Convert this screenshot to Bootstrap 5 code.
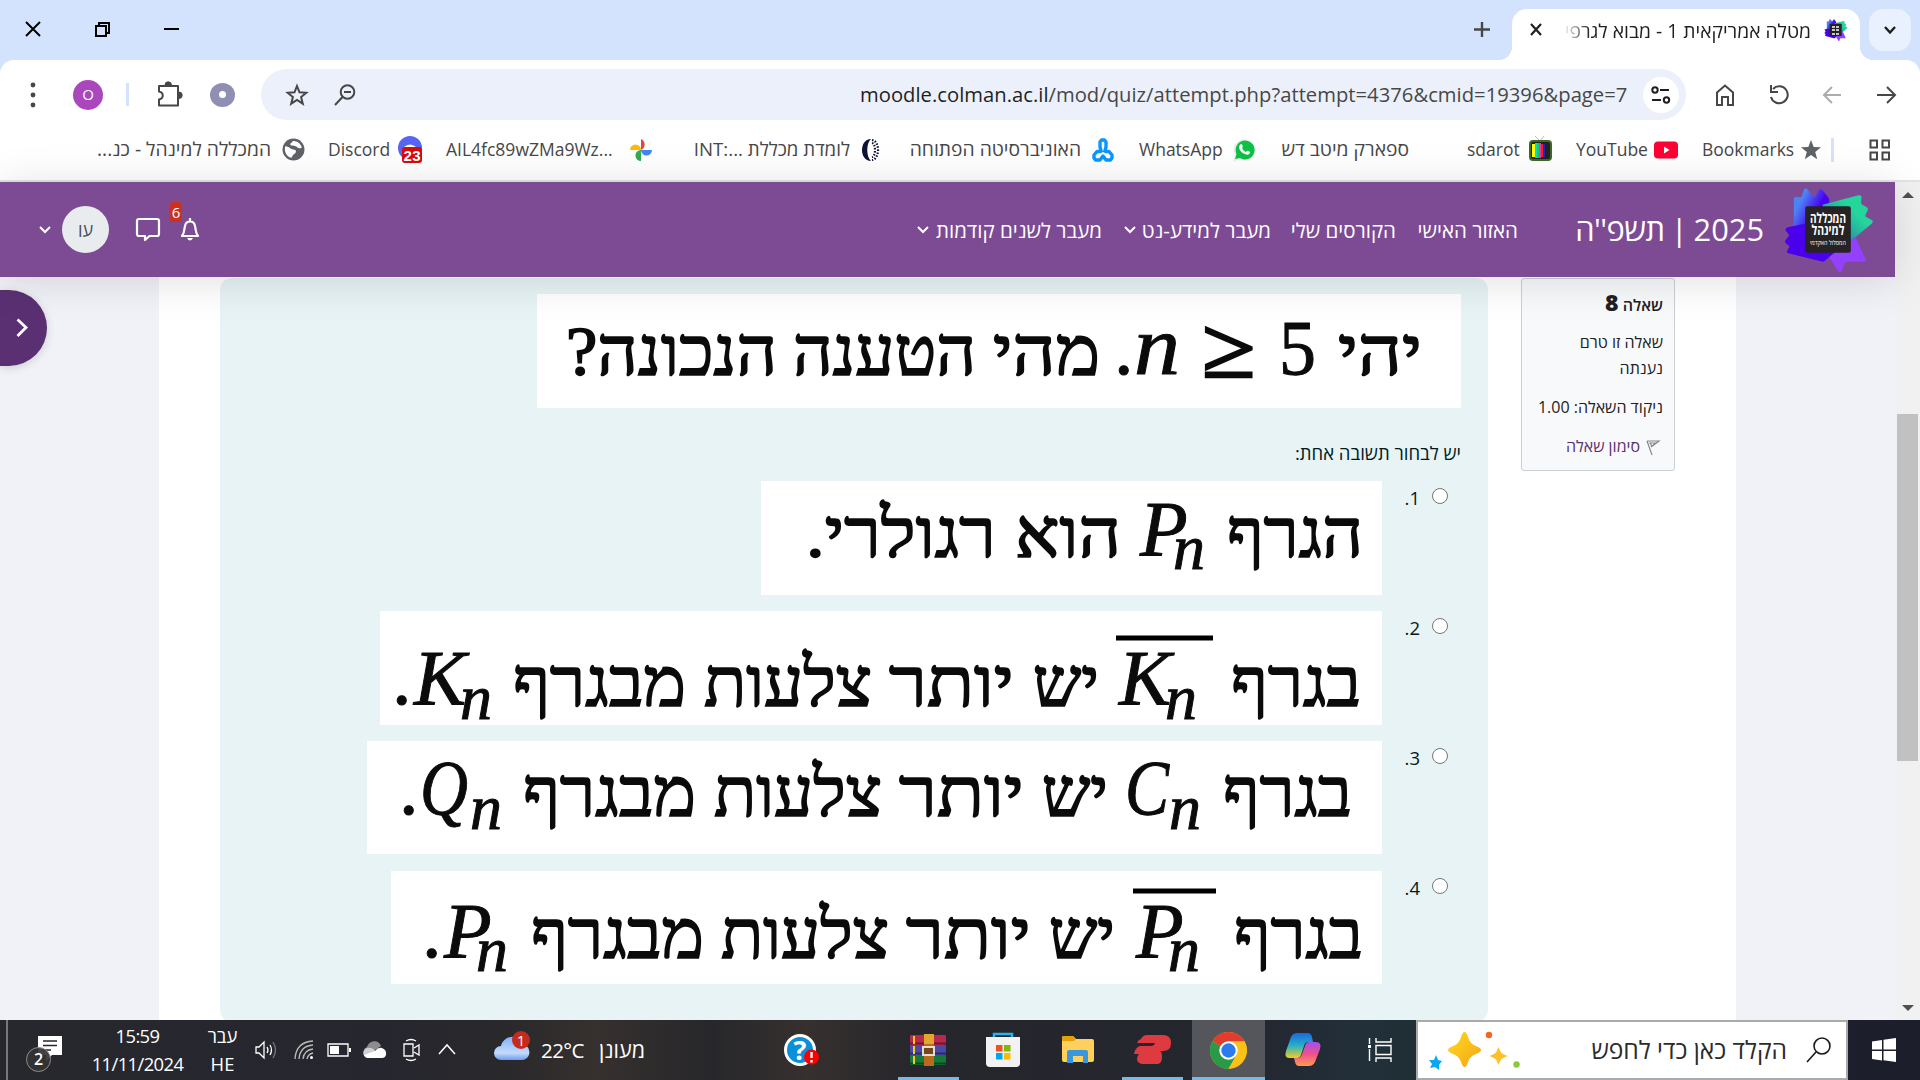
<!DOCTYPE html>
<html lang="he">
<head>
<meta charset="utf-8">
<title>מטלה אמריקאית 1 - מבוא לגרפים</title>
<link rel="stylesheet" href="https://cdn.jsdelivr.net/npm/bootstrap@5.3.0/dist/css/bootstrap.min.css">
<style>
html,body{height:100%;overflow:hidden}
body{font-family:"Open Sans","Liberation Sans",sans-serif;width:1920px;height:1080px;background:#fff;color:#1f1f1f;line-height:1}
svg{display:block;flex:none;overflow:visible}
.bar>*{flex:none;white-space:nowrap}
.ln{fill:none;stroke:#474747;stroke-width:2}
/* tab strip */
.strip{height:60px;background:#d3e3fd}
.strip-l{height:58px}
.w-close{margin-left:25px}.w-rest{margin-left:54px}.w-min{margin-left:54px}
.w-plus{margin-left:1295px}
.tabx{margin-left:22px;width:348px;height:51px;margin-top:9px;background:#fff;border-radius:15px 15px 0 0;position:relative}
.tabx:before,.tabx:after{content:"";position:absolute;bottom:0;width:14px;height:14px}
.tabx:before{left:-14px;background:radial-gradient(circle at 0 0,#d3e3fd 14px,#fff 14.5px)}
.tabx:after{right:-14px;background:radial-gradient(circle at 100% 0,#d3e3fd 14px,#fff 14.5px)}
.tab-x{margin-left:17px;margin-bottom:9px}
.tab-t{margin-left:20px;width:262px;padding-right:14px;font-size:19.3px;overflow:hidden;line-height:28px;margin-bottom:7px;-webkit-mask-image:linear-gradient(90deg,transparent 0,#000 27px)}
.tab-i{margin-left:-1px;margin-bottom:9px}
.tabs-btn{margin-left:9px;margin-top:9px;width:42px;height:42px;border-radius:14px;background:#e9f0fe}
/* toolbar */
.tools-wrap{background:#d3e3fd}
.tools{height:69px;background:#fff;border-radius:14px 14px 0 0}
.t-dots{margin-left:30px}
.t-av{margin-left:37px;width:30px;height:30px;border-radius:50%;background:#ab47bc;color:#fff;font-size:15px}
.t-sep{margin-left:23px;width:3px;height:23px;background:#d3e3fd}
.t-puz{margin-left:27px}
.t-dot{margin-left:27px;width:25px;height:24px;border-radius:50%;background:#8e8fb3}
.t-dot i{width:7px;height:7px;border-radius:50%;background:#fff}
.omni{margin-left:26px;width:1425px;height:51px;border-radius:26px;background:#ebf0fa}
.o-star{margin-left:24px}.o-mag{margin-left:24px}
.o-url{margin-left:503px;width:768px;font-size:20.2px;color:#474747;line-height:30px;letter-spacing:.03px;margin-bottom:2px}
.o-url b{font-weight:400;color:#1f1f1f}
.o-set{margin-left:15px;width:36px;height:36px;border-radius:50%;background:#fff}
.t-home{margin-left:28px}.t-ref{margin-left:32px}.t-bk{margin-left:32px;opacity:.45}.t-fw{margin-left:35px}
/* bookmarks */
.marks{height:51px;background:#fff;font-size:17.5px;color:#474747;padding-bottom:10px}
.marks span{line-height:26px;text-align:right;margin-bottom:1px}
.marks span[dir]{font-size:19.3px;text-align:right}
.marks .k4[dir]{font-size:18.7px}
.marks .rule{width:3px;height:24px;background:#d3e3fd;margin-left:11px}
.k1{width:172px;margin-left:99px}.k2{width:59px;margin-left:23px}.k3{width:164px;margin-left:24px}.k4{width:156px;margin-left:40px}.k5{width:173px;margin-left:27px}.k6{width:82px;margin-left:25px}.k7{width:129px;margin-left:24px}.k8{width:51px;margin-left:58px}.k9{width:68px;margin-left:24px}.k10{width:87px;margin-left:24px}
.marks .gi{margin-left:11px}.marks .gn{margin-left:10px}
.edge{height:2px;background:#dfe5e3}
/* site header */
.site{width:1895px;height:95px;background:#7d4b94;color:#fff;z-index:3;position:relative;box-shadow:0 4px 44px rgba(0,0,0,.13)}
.h-chev{margin-left:39px}
.h-av{margin-left:11px;width:47px;height:47px;border-radius:50%;background:#e9ecef;color:#495057;font-size:18px}
.h-chat{margin-left:27px}
.h-bell{margin-left:20px;position:relative}
.h-num{position:absolute;left:-10px;top:-16px;width:12px;height:20px;border-radius:2px;background:#ca3120;font-size:15px;line-height:20px;text-align:center}
.navt{font-size:20.5px;font-weight:500;line-height:30px}
.n-c1{margin-left:717px}.n1{margin-left:6px;width:167px}.n-c2{margin-left:22px}.n2{margin-left:6px;width:129px}.n3{margin-left:22px;width:103px}.n4{margin-left:21px;width:101px}
.h-title{margin-left:57px;width:189px;font-size:30.8px;line-height:48px;word-spacing:-2px;margin-bottom:2px}
.h-title span{letter-spacing:-.5px}
.h-logo{margin-left:19px}
/* page */
.view{height:743px;background:#f0f2f7}
.sheet{margin-left:112px;width:1577px;background:#fff}
.drawer{width:47px;height:76px;margin-top:13px;border-radius:0 38px 38px 0;background:#5a3072;box-shadow:0 2px 8px rgba(0,0,0,.15)}
.drawer svg{margin-left:16px}
.question{margin-left:61px;width:1268px;height:744px;margin-top:1px;border-radius:12px;background:#e7f3f5;padding:16px 27px 0 0}
.pic{background:#fff}
.prompt{font-size:18.5px;line-height:26px;margin:32px 0 15px;color:#001a1e}
.opt{height:114px;margin-bottom:16px}
.opt input{appearance:none;width:16px;height:16px;border:1.3px solid #767676;border-radius:50%;background:#fff;margin:7px 13px 0 12px}
.opt label{width:17px;margin-left:21px;font-size:18.5px;line-height:34px;text-align:right;color:#001a1e}
.heb{direction:rtl;font-family:"Liberation Serif",serif;font-size:69px;fill:#0b0b0b;stroke:#0b0b0b;stroke-width:1.7}
.mth{font-family:"Liberation Serif",serif;font-style:italic;font-size:78px;fill:#0b0b0b;stroke:#0b0b0b;stroke-width:1}
.sb{font-size:64px}.up{font-style:normal}.nn{font-size:84px}.ge{font-size:86px;stroke-width:2.5}
.info{margin-left:33px;width:154px;height:193px;margin-top:1px;border:1px solid #cad0d7;border-radius:3px;background:#f8f9fa;padding:5px 11px;font-size:16px;color:#1d2125}
.info>div{white-space:nowrap}
.i-no{font-weight:600;line-height:36px;margin-bottom:6px}.i-no b{font-size:23px}
.i-st{line-height:26px;margin-bottom:13px}.i-fl{color:#5a3072;margin-top:13px;line-height:26px}
.i-fl svg{margin:3px 2px 0 6px}
.i-gr{line-height:26px}
.scroller{width:25px;height:838px;background:#f1f1f1}
.thumb{width:21px;height:347px;background:#c1c1c1;margin-top:216px}
.sc-u{margin-top:10px}.sc-d{margin-top:244px}
/* taskbar */
.task{height:60px;background:linear-gradient(90deg,#27282d 0,#26262f 20%,#29282b 26%,#36302e 31%,#27272b 37%,#36302e 42%,#26262c 48%,#24262f 65%,#22303a 71%,#1f2f35 74%,#1c1f2b 97%);color:#fff;font-size:18px}
.x0{margin-left:6px;width:2px;height:60px;background:#77787b}
.x1{margin-left:18px;margin-top:8px}
.x2{margin-left:25px;width:97px;font-size:18.4px;line-height:28px;letter-spacing:-.6px}
.x3{margin-left:19px;width:35px;line-height:28px;font-size:18.4px}
.x4{margin-left:15px}.x5{margin-left:17px}.x6{margin-left:13px}.x7{margin-left:11px}.x8{margin-left:16px}.x9{margin-left:17px}.x10{margin-left:37px}
.x11{margin-left:11px;width:45px;font-size:20.6px;letter-spacing:-.6px;line-height:30px}
.x12{margin-left:12px;width:47px;font-size:21.5px;line-height:30px}
.x13{margin-left:139px}
.app{width:61px;height:60px;border-bottom:3px solid transparent;padding-top:3px}
.app.run{border-color:#76b9ed}
.app.on{width:73px;background:#55565b}
.a1{margin-left:78px}.a2{margin-left:13px}.a3{margin-left:14px}.a4{margin-left:14px}.a5{margin-left:9px}.a6{margin-left:7px}.a7{margin-left:34px}
.find{margin-left:23px;width:432px;height:60px;background:#fff;border:2px solid #a9aaac;color:#2b2b2b}
.f-s{margin-left:10px}
.f-t{margin-left:66px;width:200px;font-size:24.6px;line-height:34px}
.f-m{margin-left:19px}
.win{margin-left:24px}
</style>
<script src="https://cdn.jsdelivr.net/npm/bootstrap@5.3.0/dist/js/bootstrap.bundle.min.js"></script>
</head>
<body class="d-flex flex-column">
<svg width="0" height="0" class="position-absolute">
<defs>
<linearGradient id="lb" x1="0" y1=".2" x2="1" y2=".8"><stop offset=".2" stop-color="#4b83f5"/><stop offset=".65" stop-color="#4a00f0"/></linearGradient>
<linearGradient id="lg" x1="0" y1="1" x2="1" y2="0"><stop offset=".1" stop-color="#2a6da8"/><stop offset=".65" stop-color="#24d69c"/></linearGradient>
<linearGradient id="cl" x1="0" y1="0" x2="0" y2="1"><stop offset="0" stop-color="#7fb0f7"/><stop offset=".7" stop-color="#c4dafb"/><stop offset="1" stop-color="#6b9cf0"/></linearGradient>
<linearGradient id="c1" x1="0" y1="0" x2="0" y2="1"><stop offset="0" stop-color="#1b67e0"/><stop offset=".5" stop-color="#25b0c8"/><stop offset="1" stop-color="#f0d020"/></linearGradient>
<linearGradient id="c2" x1="0" y1="0" x2="0" y2="1"><stop offset="0" stop-color="#a050f0"/><stop offset=".5" stop-color="#f0508c"/><stop offset="1" stop-color="#ff9a50"/></linearGradient>
<linearGradient id="st" x1="0" y1="0" x2="1" y2="1"><stop offset=".2" stop-color="#ffcf1f"/><stop offset="1" stop-color="#f2a516"/></linearGradient>
<symbol id="logo" viewBox="1150 30 275 264">
<path fill="url(#lb)" d="M1182 68q0-5 5-5l14 1q4 0 5-5l7-19q4-6 10 0l17 21q4 3 7 0l8-17q7-7 13-2l20 26v90h-106z"/>
<path fill="url(#lg)" d="M1268 86l108-28q9-2 9 5l-1 18q0 4 5 6l10 5q7 4 5 10l-7 14q-2 4 2 7l18 10q4 3 0 9l-65 54-60 10z"/>
<path fill="#4a00ea" d="M1222 142l-58 12q-8 2-7 9l9 12q3 5-2 9l-7 9q-4 6 3 10l7 6q4 3-1 8l-4 8q-2 5 4 7l97 24q8 2 12-2l50-40z"/>
<path fill="#9340ff" d="M1366 182l31 67q3 8-5 8h-50q-7 0-9 7l-7 20q-5 7-11 1l-27-42z"/>
<rect x="1216" y="91" width="137" height="139" rx="6" fill="#272324"/>
</symbol>
</defs>
</svg>

<header>
<div class="strip bar d-flex align-items-start">
 <div class="strip-l bar d-flex align-items-center">
 <svg class="w-close" width="16" height="16"><path d="M1 1l14 14M15 1L1 15" stroke="#000" stroke-width="2"/></svg>
 <svg class="w-rest" width="15" height="15"><path d="M1 4h10v10H1zM4 4V1h10v10h-3" fill="none" stroke="#000" stroke-width="2"/></svg>
 <svg class="w-min" width="15" height="3"><path d="M0 1h15" stroke="#000" stroke-width="2"/></svg>
 <svg class="w-plus" width="16" height="16"><path d="M8 1v15M0 8.500h16" stroke="#474747" stroke-width="2.400"/></svg>
 </div>
 <div class="tabx bar d-flex align-items-center">
  <svg class="tab-x" width="14" height="14"><path d="M2 1l10 11M12 1L2 12" stroke="#1f1f1f" stroke-width="2.200"/></svg>
  <div class="tab-t" dir="rtl">מטלה אמריקאית 1 - מבוא לגרפי</div>
  <svg class="tab-i" width="24" height="24"><use href="#logo" width="24" height="24"/><path d="M8 9h7M8 12h7M8 16h7" stroke="#fff" stroke-width="1.500" stroke-dasharray="3 1"/></svg>
 </div>
 <div class="tabs-btn d-flex align-items-center justify-content-center"><svg width="14" height="9"><path d="M2 1l5 5.500L12 1" fill="none" stroke="#1f1f1f" stroke-width="2.400"/></svg></div>
</div>
<div class="tools-wrap"><div class="tools bar d-flex align-items-center">
 <svg class="t-dots" width="6" height="26" fill="#474747"><circle cx="3" cy="3" r="2.400"/><circle cx="3" cy="13" r="2.400"/><circle cx="3" cy="23" r="2.400"/></svg>
 <div class="t-av d-flex align-items-center justify-content-center">O</div>
 <div class="t-sep"></div>
 <svg class="t-puz" width="27" height="26" viewBox="0 0 27 26"><path class="ln" d="M3 4h19v19.500H3v-6c5-1 5-7 0-8z" stroke-linejoin="round"/><path d="M9 3a3.200 3.200 0 0 1 6.400 0zM23 10a3.200 3.200 0 0 1 0 6.400z" fill="#474747" stroke="#474747"/></svg>
 <div class="t-dot d-flex align-items-center justify-content-center"><i></i></div>
 <div class="omni bar d-flex align-items-center">
  <svg class="o-star" width="24" height="24" viewBox="0 0 24 24"><path class="ln" d="M12 3l2.500 6.300 6.800.5-5.200 4.300 1.700 6.600L12 17l-5.800 3.700 1.700-6.600-5.200-4.300 6.800-.5z"/></svg>
  <svg class="o-mag" width="24" height="24" viewBox="0 0 24 24"><circle class="ln" cx="14.500" cy="9" r="6.800"/><path class="ln" d="M9.500 14L2 22M11 9h7"/></svg>
  <div class="o-url"><b>moodle.colman.ac.il</b>/mod/quiz/attempt.php?attempt=4376&amp;cmid=19396&amp;page=7</div>
  <div class="o-set d-flex align-items-center justify-content-center"><svg width="20" height="18" viewBox="0 0 20 18"><g fill="none" stroke="#1f1f1f" stroke-width="2"><circle cx="4" cy="4" r="2.700"/><path d="M9 4h9M1 14h9"/><circle cx="15.500" cy="14" r="2.700"/></g></svg></div>
 </div>
 <svg class="t-home" width="22" height="24"><path class="ln" d="M3 9.500L11 2.500l8 7V22h-5v-8H8v8H3z"/></svg>
 <svg class="t-ref" width="22" height="22"><path class="ln" d="M5 5a8.500 8.500 0 1 1-2 8M3 1v7h7"/></svg>
 <svg class="t-bk" width="20" height="20"><path class="ln" d="M19 10H3M10 2l-8 8 8 8"/></svg>
 <svg class="t-fw" width="20" height="20"><path class="ln" d="M0 10h17M10 2l8 8-8 8"/></svg>
</div></div>
<nav class="marks bar d-flex align-items-center">
 <span class="k1" dir="rtl">המכללה למינהל - כנ...</span>
 <svg class="gi" width="23" height="23" viewBox="0 0 22 22"><circle cx="11" cy="11" r="10.500" fill="#5f6368"/><path d="M3 8c4 0 5 3 8 3s3 3 1 4-2 3-3 4c-5-1-7-6-6-11zM10 3c3-1 8 2 9 6-3 2-4 0-6-1s-5 0-5-2 2-1 2-3z" fill="#fff"/></svg>
 <span class="k2">Discord</span>
 <svg class="gi" width="24" height="28" viewBox="0 0 24 28"><circle cx="12" cy="12" r="12" fill="#5865f2"/><path d="M6 11q6-5 12 0v5H6z" fill="#fff"/><rect x="4" y="11" width="20" height="16" rx="3" fill="#d80b0b"/><text x="14" y="24.500" text-anchor="middle" font-size="15" font-weight="700" fill="#fff" font-family="Liberation Sans" textLength="17">23</text></svg>
 <span class="k3">AIL4fc89wZMa9Wz...</span>
 <svg class="ms-3" width="28" height="24" viewBox="-3 0 28 24"><path d="M12 12V1a6 6 0 0 1 0 11z" fill="#ea4335"/><path d="M12 12h11a5.500 5.500 0 0 1-11 0z" fill="#4285f4"/><path d="M12 12v11a5.500 5.500 0 0 1 0-11z" fill="#34a853"/><path d="M12 12H1a5.500 5.500 0 0 1 11 0z" fill="#fbbc04"/></svg>
 <span class="k4" dir="rtl">לומדת מכללת ...:INT</span>
 <svg class="gi" width="20" height="24" viewBox="0 0 20 24"><path d="M10 1C-2 1-2 23 10 23C5 19 5 5 10 1z" fill="#0e1433"/><path d="M11 2c8 1 8 19 0 20M11 5c4 1 4 13 0 14" fill="none" stroke="#0e1433" stroke-width="2.200" stroke-dasharray="1.500 1.500"/></svg>
 <span class="k5" dir="rtl">האוניברסיטה הפתוחה</span>
 <svg class="gi" width="22" height="24" viewBox="0 0 22 24"><g fill="none" stroke="#0a96ff" stroke-width="3.400" stroke-linejoin="round"><path d="M9.500 14.500L8 9V4l1.500-2h3L14 4v5l-1.500 5.500"/><path d="M9.500 13.500H5L2 17v3l1.500 2H8l3-4 3 4h4.500l1.500-2v-3l-3-3.500h-4.500"/></g></svg>
 <span class="k6">WhatsApp</span>
 <svg class="gi" width="24" height="24" viewBox="0 0 24 24"><path d="M1 24l2-7a10.500 10.500 0 1 1 4 4z" fill="#e6eee8"/><path d="M3 21l1.500-5a9.500 9.500 0 1 1 3.500 4z" fill="#0cc143"/><path d="M8 7c1-2 2-1 2.500.5s0 2-.5 2.500c1 2 2 3 4 4 1-1 1.500-1.500 2.500-1s2 1 1.500 2c-1 2-3 2-5 1-3-1-6-4-6-7 0-1 .5-1.500 1-2z" fill="#fff"/></svg>
 <span class="k7" dir="rtl">ספארק מיטב דש</span>
 <span class="k8">sdarot</span>
 <svg class="gn" width="24" height="28" viewBox="0 0 24 28"><path d="M7 0l5 5 4-5" stroke="#b5c29c" fill="none"/><rect x="1" y="4" width="23" height="21" rx="4" fill="#3f6a25"/><rect x="3" y="6" width="19" height="17" rx="2" fill="#222"/><path d="M4 8h3v13H4z" fill="#ff0"/><path d="M7 7h2v15H7z" fill="#0dd"/><path d="M9 7h2v15H9z" fill="#2c4"/><path d="M11 7h2v15h-2z" fill="#e3c"/><path d="M13 8h2v13h-2z" fill="#e21"/><path d="M15 8h2v13h-2z" fill="#22c"/></svg>
 <span class="k9">YouTube</span>
 <svg class="gn" width="24" height="18"><rect width="24" height="17" y=".5" rx="4" fill="#f03"/><path d="M10 5.500v7l5.500-3.500z" fill="#fff"/></svg>
 <span class="k10">Bookmarks</span>
 <svg class="gi" width="20" height="20" viewBox="-1 0 20 20"><path d="M10 0l2.700 7 7.300.3-5.800 4.600 2 7.400-6.200-4.200-6.200 4.200 2-7.400L0 7.300 7.300 7z" fill="#5f6368"/></svg>
 <div class="rule"></div>
 <svg class="ms-4 ps-2" width="32" height="22"><path class="ln" stroke-width="2.600" d="M4.500 1.500h6.500v7H4.500zM16.500 1.500H23v7h-6.500zM4.500 13.500H11v7H4.500zM16.500 13.500H23v7h-6.500z"/></svg>
</nav>
<div class="edge"></div>
</header>

<div class="d-flex flex-grow-1">
<div class="d-flex flex-column">
<div class="site bar d-flex align-items-center">
 <svg class="h-chev" width="12" height="8"><path d="M1 1l5 5 5-5" fill="none" stroke="#fff" stroke-width="2"/></svg>
 <div class="h-av d-flex align-items-center justify-content-center">עו</div>
 <svg class="h-chat" width="24" height="24" viewBox="0 0 24 24"><path d="M3 1h18q2 0 2 2v13q0 2-2 2h-7.500L9 22v-4H3q-2 0-2-2V3q0-2 2-2z" fill="none" stroke="#fff" stroke-width="2.200" stroke-linejoin="round"/></svg>
 <div class="h-bell"><svg width="20" height="23" viewBox="0 0 20 23"><path d="M10 0v3M2 18c3-4 2-7 3-10 1-6 9-6 10 0 1 3 0 6 3 10z" fill="none" stroke="#fff" stroke-width="2.200" stroke-linejoin="round"/><path d="M7 20h6q-3 5-6 0z" fill="#fff"/></svg><span class="h-num">6</span></div>
 <svg class="n-c1" width="12" height="8"><path d="M1 1l5 5 5-5" fill="none" stroke="#fff" stroke-width="2"/></svg>
 <div class="navt n1" dir="rtl">מעבר לשנים קודמות</div>
 <svg class="n-c2" width="12" height="8"><path d="M1 1l5 5 5-5" fill="none" stroke="#fff" stroke-width="2"/></svg>
 <div class="navt n2" dir="rtl">מעבר למידע-נט</div>
 <div class="navt n3" dir="rtl">הקורסים שלי</div>
 <div class="navt n4" dir="rtl">האזור האישי</div>
 <div class="h-title" dir="rtl">2025 | <span>תשפ''ה</span></div>
 <svg class="h-logo" width="92" height="88" viewBox="0 0 92 88"><use href="#logo" width="92" height="88"/><g fill="#fff" text-anchor="middle" font-family="Open Sans,Liberation Sans" font-weight="700"><text x="45" y="37" font-size="14" textLength="36" lengthAdjust="spacingAndGlyphs">המכללה</text><text x="45" y="49" font-size="14" textLength="33" lengthAdjust="spacingAndGlyphs">למינהל</text><text x="45" y="59" font-size="7" font-weight="400" textLength="36" lengthAdjust="spacingAndGlyphs">המסלול האקדמי</text></g></svg>
</div>
<div class="view bar d-flex align-items-start overflow-hidden">
 <div class="drawer d-flex align-items-center"><svg width="12" height="20"><path d="M1.500 1.500l8.500 8-8.500 8.500" fill="none" stroke="#fff" stroke-width="2.800"/></svg></div>
 <div class="sheet bar d-flex align-items-start h-100">
  <main class="question d-flex flex-column align-items-end">
   <svg class="pic" width="924" height="114" viewBox="537 294 924 114">
    <g class="heb"><text x="1422" y="375" textLength="84" lengthAdjust="spacingAndGlyphs">יהי</text><text x="1100" y="375" textLength="107" lengthAdjust="spacingAndGlyphs">מהי</text><text x="976" y="375" textLength="183" lengthAdjust="spacingAndGlyphs">הטענה</text><text x="777" y="375" textLength="211" lengthAdjust="spacingAndGlyphs">הנכונה?</text></g>
    <g class="mth"><text class="up" x="1279" y="374" textLength="37" lengthAdjust="spacingAndGlyphs">5</text><text class="up ge" x="1202" y="377" textLength="53" lengthAdjust="spacingAndGlyphs">≥</text><text class="nn" x="1134" y="374" textLength="46" lengthAdjust="spacingAndGlyphs">n</text><text class="up" x="1114" y="374">.</text></g>
   </svg>
   <div class="prompt" dir="rtl">יש לבחור תשובה אחת:</div>
   <div class="opt bar d-flex align-items-start">
    <svg class="pic" width="621" height="114" viewBox="761 481 621 114">
     <g class="heb"><text x="1363" y="557" textLength="136" lengthAdjust="spacingAndGlyphs">הגרף</text><text x="1121" y="557" textLength="106" lengthAdjust="spacingAndGlyphs">הוא</text><text x="996" y="557" textLength="190" lengthAdjust="spacingAndGlyphs">רגולרי.</text></g>
     <text class="mth" x="1140" y="555">P<tspan class="sb" x="1173" y="569">n</tspan></text>
    </svg><label for="r1">.1</label><input type="radio" id="r1" name="q">
   </div>
   <div class="opt bar d-flex align-items-start">
    <svg class="pic" width="1002" height="114" viewBox="380 611 1002 114">
     <g class="heb"><text x="1361" y="706" textLength="130" lengthAdjust="spacingAndGlyphs">בגרף</text><text x="1099" y="706" textLength="66" lengthAdjust="spacingAndGlyphs">יש</text><text x="1014" y="706" textLength="125" lengthAdjust="spacingAndGlyphs">יותר</text><text x="872" y="706" textLength="168" lengthAdjust="spacingAndGlyphs">צלעות</text><text x="686" y="706" textLength="173" lengthAdjust="spacingAndGlyphs">מבגרף</text></g>
     <text class="mth" x="1119" y="704">K<tspan class="sb" x="1165" y="719">n</tspan></text><text class="mth" x="414" y="704">K<tspan class="sb" x="460" y="719">n</tspan></text><text class="mth up" x="392" y="704">.</text>
     <path d="M1116 638h97" stroke="#000" stroke-width="5"/>
    </svg><label for="r2">.2</label><input type="radio" id="r2" name="q">
   </div>
   <div class="opt bar d-flex align-items-start">
    <svg class="pic" width="1015" height="113" viewBox="367 741 1015 113">
     <g class="heb"><text x="1352" y="816" textLength="129" lengthAdjust="spacingAndGlyphs">בגרף</text><text x="1108" y="816" textLength="66" lengthAdjust="spacingAndGlyphs">יש</text><text x="1024" y="816" textLength="125" lengthAdjust="spacingAndGlyphs">יותר</text><text x="882" y="816" textLength="168" lengthAdjust="spacingAndGlyphs">צלעות</text><text x="696" y="816" textLength="173" lengthAdjust="spacingAndGlyphs">מבגרף</text></g>
     <text class="mth" x="1125" y="814" textLength="44" lengthAdjust="spacingAndGlyphs">C</text><text class="mth sb" x="1169" y="829">n</text><text class="mth" x="420" y="814" textLength="48" lengthAdjust="spacingAndGlyphs">Q</text><text class="mth sb" x="470" y="829">n</text><text class="mth up" x="399" y="814">.</text>
    </svg><label for="r3">.3</label><input type="radio" id="r3" name="q">
   </div>
   <div class="opt bar d-flex align-items-start">
    <svg class="pic" width="991" height="113" viewBox="391 871 991 113">
     <g class="heb"><text x="1363" y="958" textLength="129" lengthAdjust="spacingAndGlyphs">בגרף</text><text x="1115" y="958" textLength="66" lengthAdjust="spacingAndGlyphs">יש</text><text x="1031" y="958" textLength="125" lengthAdjust="spacingAndGlyphs">יותר</text><text x="889" y="958" textLength="168" lengthAdjust="spacingAndGlyphs">צלעות</text><text x="704" y="958" textLength="173" lengthAdjust="spacingAndGlyphs">מבגרף</text></g>
     <text class="mth" x="1136" y="957">P<tspan class="sb" x="1168" y="971">n</tspan></text><text class="mth" x="444" y="957">P<tspan class="sb" x="476" y="971">n</tspan></text><text class="mth up" x="422" y="957">.</text>
     <path d="M1133 891h83" stroke="#000" stroke-width="5"/>
    </svg><label for="r4">.4</label><input type="radio" id="r4" name="q">
   </div>
  </main>
  <aside class="info" dir="rtl">
   <div class="i-no">שאלה <b>8</b></div>
   <div class="i-st">שאלה זו טרם<br>נענתה</div>
   <div class="i-gr">ניקוד השאלה: 1.00</div>
   <div class="i-fl d-flex align-items-center"><svg width="15" height="16" viewBox="0 0 15 16"><path d="M1 1h12L5 7M1 1l5 14M4 3l6 0-4 3z" fill="none" stroke="#888" stroke-width="1.200"/></svg>סימון שאלה</div>
  </aside>
 </div>
</div>
</div>
<div class="scroller d-flex flex-column align-items-center">
 <svg class="sc-u" width="12" height="6"><path d="M0 6l6-6 6 6z" fill="#505050"/></svg>
 <div class="thumb"></div>
 <svg class="sc-d" width="12" height="6"><path d="M0 0l6 6 6-6z" fill="#505050"/></svg>
</div>
</div>

<footer class="task bar d-flex align-items-center">
 <div class="x0"></div>
 <svg class="x1" width="38" height="40" viewBox="26 1036 38 40"><path d="M38 1038h24v19H52l-6 6v-6h-8z" fill="#fff"/><path d="M43 1043h14M43 1047.500h14M43 1052h8" stroke="#26262c" stroke-width="1.500"/><circle cx="38.500" cy="1061.500" r="12" fill="#333" fill-opacity=".92" stroke="#8d8d90"/><text x="38.500" y="1067" text-anchor="middle" font-size="16" font-weight="600" fill="#fff">2</text></svg>
 <div class="x2 text-center">15:59<br>11/11/2024</div>
 <div class="x3 text-center">עבר<br>HE</div>
 <svg class="x4" width="22" height="20" viewBox="0 0 22 20" fill="none" stroke="#fff" stroke-width="1.300"><path d="M1 7h3l5-5v16l-5-5H1z"/><path d="M12 7q2 3 0 6M15 5q3 5 0 10"/><path d="M18 2q5 8 0 16" stroke="#777"/></svg>
 <svg class="x5" width="20" height="20" viewBox="0 0 20 20" fill="none" stroke="#bbb" stroke-width="1.300"><path d="M1 19Q2 2 19 1M5 19Q6 6 19 5M9 19q1-9 10-10M13 19q1-5 6-6"/><circle cx="17.500" cy="17.500" r="1.500" fill="#fff" stroke="none"/></svg>
 <svg class="x6" width="24" height="14" fill="#fff"><path d="M1 1h20v12H1z" fill="none" stroke="#fff" stroke-width="1.300"/><path d="M3 3h9v8H3zM22 5h2v4h-2z"/></svg>
 <svg class="x7" width="25" height="18"><path d="M4 15a5 5 0 0 1 1-9c2-7 12-8 14-1z" fill="#8d8d90"/><path d="M5 17a5 5 0 0 1 0-9.500q5-1 8 2.500 3-4 7-3 5 2 4 7-1 3-4 3z" fill="#fff"/><path d="M2 14a5 5 0 0 1 3-7q5-1 8 3z" fill="#d0d0d2"/></svg>
 <svg class="x8" width="18" height="24" fill="none" stroke="#fff" stroke-width="1.300"><path d="M1 6h9v12H1zM11 10l5-3v10l-5-3M3 3q5-3 10 0M3 21q5 3 10 0"/></svg>
 <svg class="x9" width="18" height="12"><path d="M1 10l8-9 8 9" fill="none" stroke="#fff" stroke-width="1.500"/></svg>
 <svg class="x10" width="37" height="36" viewBox="493 1033 37 36"><path d="M501 1061a7 7 0 0 1 0-14c3-12 20-12 22-2 8 2 9 14 0 16z" fill="url(#cl)"/><circle cx="521" cy="1041" r="9" fill="#c42b1c"/><text x="521" y="1046.500" font-size="15" text-anchor="middle" fill="#fff">1</text></svg>
 <div class="x11">22°C</div>
 <div class="x12" dir="rtl">מעונן</div>
 <svg class="x13" width="36" height="34" viewBox="784 1033 36 34"><circle cx="800" cy="1050" r="14.500" fill="#0a8fd8" stroke="#fff" stroke-width="3"/><text x="800" y="1060" font-size="27" font-weight="700" text-anchor="middle" fill="#fff">?</text><circle cx="811.500" cy="1057" r="7.500" fill="#f00"/><path d="M811.500 1052v6M811.500 1060v2.500" stroke="#fff" stroke-width="2.400"/></svg>
 <div class="app run a1 d-flex align-items-center justify-content-center"><svg width="37" height="32" viewBox="0 0 37 32"><rect y="1" width="36" height="10" rx="1" fill="#b9274c"/><rect y="11" width="36" height="10" rx="1" fill="#494aa8"/><rect y="21" width="36" height="10" rx="1" fill="#157a37"/><path d="M0 9.500h36M0 19.500h36M0 29.500h36" stroke="#0006" stroke-width="2"/><path d="M4 2v8M4 12v8M4 22v8" stroke="#f5c922" stroke-width="2"/><rect x="14" width="10" height="32" fill="#ba6a1c"/><rect x="14" width="10" height="10" fill="#e1a72c"/><rect x="13" y="13" width="11" height="8" fill="#7a4618" stroke="#ddd" stroke-width="2"/></svg></div>
 <div class="app a2 d-flex align-items-center justify-content-center"><svg width="36" height="36" viewBox="0 0 36 36"><path d="M9 6V2h18v4" fill="none" stroke="#28b2ef" stroke-width="2.500"/><path d="M1 5h34v26q0 4-4 4H5q-4 0-4-4z" fill="#f2f2f2"/><path d="M11 13h6.500v6.500H11z" fill="#f25022"/><path d="M19 13h6.500v6.500H19z" fill="#7fba00"/><path d="M11 21h6.500v6.500H11z" fill="#00a4ef"/><path d="M19 21h6.500v6.500H19z" fill="#ffb900"/></svg></div>
 <div class="app a3 d-flex align-items-center justify-content-center"><svg width="32" height="28"><path d="M0 2q0-2 2-2h9l3 3h16q2 0 2 2v19q0 2-2 2H2q-2 0-2-2z" fill="#ffd15c"/><path d="M0 2q0-2 2-2h9l3 3-2 2H0z" fill="#e3a008"/><path d="M5 27V16q0-2 2-2h17q2 0 2 2v11h-5v-7H11v7z" fill="#3b97dd"/></svg></div>
 <div class="app run a4 d-flex align-items-center justify-content-center"><svg width="37" height="30" viewBox="0 0 37 30"><path d="M7 4q2-4 6-4h16q8 0 8 8 0 8-8 8h-3q2 1 2 6 0 6-4 7H8q-5-1-5-5 0-3 2-5H0q1-5 3-6 1-2 4-2h11q3-1 3-3H3q1-3 4-4z" fill="#de3a40"/></svg></div>
 <div class="app run on a5 d-flex align-items-center justify-content-center"><svg width="37" height="37" viewBox="0 0 36 36"><circle cx="18" cy="18" r="18" fill="#fbc116"/><path d="M18 18L2.400 9A18 18 0 0 1 33.600 9z" fill="#e33b2e"/><path d="M2.400 9A18 18 0 0 0 18 36l8-14-8-4z" fill="#2a9a48"/><path d="M18 9h15.600q5 9-1 18L18 36l8-14z" fill="#fbc116"/><circle cx="18" cy="18" r="9" fill="#fff"/><circle cx="18" cy="18" r="7" fill="#2a7af0"/></svg></div>
 <div class="app a6 d-flex align-items-center justify-content-center"><svg width="36" height="34" viewBox="0 0 36 34"><path d="M12 0h11q3 0 4 4l1 5h-5q-3 0-4 4l-3 9q-1 3-4 3H4q-5 0-3-7L6 4q2-4 6-4z" fill="url(#c1)"/><path d="M24 33H14q-3 0-4-4l-1-4h3q4 0 5-4l3-8q1-4 4-4h7q6 0 4 7l-5 13q-2 4-6 4z" fill="url(#c2)"/></svg></div>
 <svg class="a7" width="26" height="24" viewBox="0 0 26 24" fill="none" stroke="#fff" stroke-width="1.400"><path d="M2.500 0v6M2.500 11v12M9 0v4h15V0M9 24v-4h15v4M9 7.500h15v9H9z"/><path d="M1 7h3v3H1z" fill="#fff" stroke="none"/></svg>
 <div class="find bar d-flex align-items-center">
  <svg class="f-s" width="93" height="40" viewBox="1428 1030 93 40"><path d="M1464.500 1032q2 0 3.500 5 2 7 8 9 5 2 5 4t-5 4q-6 2-8 8-1.500 5-3.500 5t-3.500-5q-2-6-8-8-5-2-5-4t5-4q6-2 8-9 1.500-5 3.500-5z" fill="url(#st)"/><path d="M1498.500 1047q2 5 3 6t6 3q-5 2-6 3t-3 6q-2-5-3-6t-6-3q5-2 6-3t3-6z" fill="#fdc02c"/><path d="M1436 1055l2 5 4 1-3 4v5l-4-3-5 1 2-4-3-4 5 0z" fill="#09a9f2"/><circle cx="1489" cy="1035" r="3.200" fill="#f26522"/><circle cx="1516.500" cy="1064.500" r="3.200" fill="#8dc63f"/></svg>
  <div class="f-t" dir="rtl">הקלד כאן כדי לחפש</div>
  <svg class="f-m" width="25" height="26" fill="none" stroke="#1b1b1b" stroke-width="1.600"><circle cx="16" cy="9" r="8"/><path d="M10 15L1 25"/></svg>
 </div>
 <svg class="win" width="24" height="24" fill="#fff"><path d="M0 3.500L10 2v9.500H0zM11.500 1.800L24 0v11.500H11.500zM0 13h10v9.500L0 21zM11.500 13H24v11l-12.500-1.800z"/></svg>
</footer>
</body>
</html>
